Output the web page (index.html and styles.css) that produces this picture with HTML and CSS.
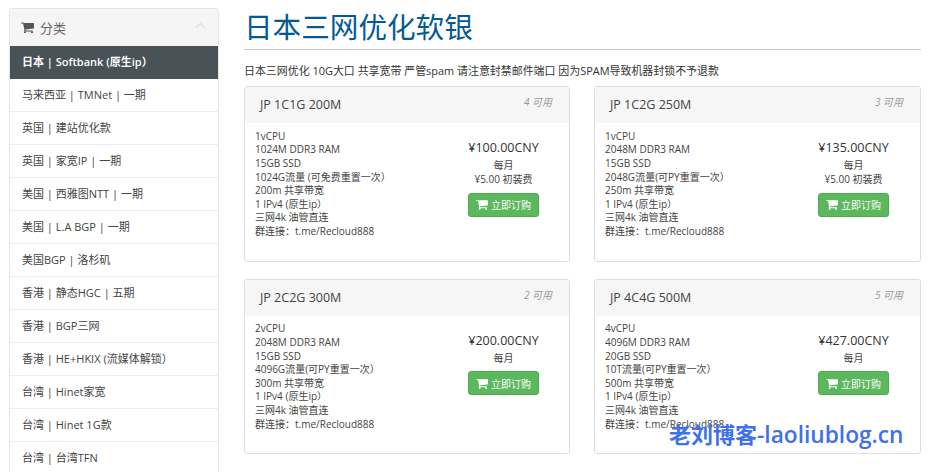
FILE: index.html
```html
<!DOCTYPE html>
<html lang="zh">
<head>
<meta charset="utf-8">
<title>日本三网优化软银</title>
<link rel="stylesheet" href="styles.css">
</head>
<body>
<svg class="defs" width="0" height="0"><defs><symbol id="cart" viewBox="0 0 1664 1408"><path d="M640 1280a128 128 0 1 1-256 0 128 128 0 0 1 256 0zm896 0a128 128 0 1 1-256 0 128 128 0 0 1 256 0zm128-1088v512c0 32-25 60-57 64L563 896c5 23 13 47 13 64 0 23-14 44-24 64h920c35 0 64 29 64 64s-29 64-64 64H448c-35 0-64-29-64-64 0-31 45-105 61-136L268 128H64C29 128 0 99 0 64S29 0 64 0h256c42 0 47 50 53 64h1227c35 0 64 29 64 64z" transform="translate(0 64)"/></symbol></defs></svg>
<div class="page">
<aside class="sidebar">
<div class="side-head">
<span class="side-title"><svg class="icon-head"><use href="#cart"/></svg>分类</span>
<svg class="chevron" viewBox="0 0 16 10"><path d="M1.5 8.5 8 2l6.5 6.5" fill="none" stroke="currentColor" stroke-width="2.6"/></svg>
</div>
<ul class="side-list">
<li class="side-item active">日本 | Softbank (原生ip）</li>
<li class="side-item">马来西亚 | TMNet | 一期</li>
<li class="side-item">英国 | 建站优化款</li>
<li class="side-item">英国 | 家宽IP | 一期</li>
<li class="side-item">美国 | 西雅图NTT | 一期</li>
<li class="side-item">美国 | L.A BGP | 一期</li>
<li class="side-item">美国BGP | 洛杉矶</li>
<li class="side-item">香港 | 静态HGC | 五期</li>
<li class="side-item">香港 | BGP三网</li>
<li class="side-item">香港 | HE+HKIX (流媒体解锁）</li>
<li class="side-item">台湾 | Hinet家宽</li>
<li class="side-item">台湾 | Hinet 1G款</li>
<li class="side-item">台湾 | 台湾TFN</li>
</ul>
</aside>
<main class="main">
<h1 class="title">日本三网优化软银</h1>
<p class="desc">日本三网优化 10G大口 共享宽带 严管spam 请注意封禁邮件端口 因为SPAM导致机器封锁不予退款</p>
<div class="cards">
<section class="card">
<header class="card-head"><span class="card-name">JP 1C1G 200M</span><em class="stock">4 可用</em></header>
<div class="card-body">
<div class="specs">1vCPU<br>1024M DDR3 RAM<br>15GB SSD<br>1024G流量 (可免费重置一次）<br>200m 共享带宽<br>1 IPv4 (原生ip）<br>三网4k 油管直连<br>群连接：t.me/Recloud888</div>
<div class="buy"><div class="price">¥100.00CNY</div><div class="cycle">每月</div><div class="cycle">¥5.00 初装费</div><a class="btn"><svg class="icon-btn"><use href="#cart"/></svg>立即订购</a></div>
</div>
</section>
<section class="card">
<header class="card-head"><span class="card-name">JP 1C2G 250M</span><em class="stock">3 可用</em></header>
<div class="card-body">
<div class="specs">1vCPU<br>2048M DDR3 RAM<br>15GB SSD<br>2048G流量(可PY重置一次）<br>250m 共享带宽<br>1 IPv4 (原生ip）<br>三网4k 油管直连<br>群连接：t.me/Recloud888</div>
<div class="buy"><div class="price">¥135.00CNY</div><div class="cycle">每月</div><div class="cycle">¥5.00 初装费</div><a class="btn"><svg class="icon-btn"><use href="#cart"/></svg>立即订购</a></div>
</div>
</section>
<section class="card">
<header class="card-head"><span class="card-name">JP 2C2G 300M</span><em class="stock">2 可用</em></header>
<div class="card-body">
<div class="specs">2vCPU<br>2048M DDR3 RAM<br>15GB SSD<br>4096G流量(可PY重置一次）<br>300m 共享带宽<br>1 IPv4 (原生ip）<br>三网4k 油管直连<br>群连接：t.me/Recloud888</div>
<div class="buy"><div class="price">¥200.00CNY</div><div class="cycle">每月</div><a class="btn"><svg class="icon-btn"><use href="#cart"/></svg>立即订购</a></div>
</div>
</section>
<section class="card">
<header class="card-head"><span class="card-name">JP 4C4G 500M</span><em class="stock">5 可用</em></header>
<div class="card-body">
<div class="specs">4vCPU<br>4096M DDR3 RAM<br>20GB SSD<br>10T流量(可PY重置一次）<br>500m 共享带宽<br>1 IPv4 (原生ip）<br>三网4k 油管直连<br>群连接：t.me/Recloud888</div>
<div class="buy"><div class="price">¥427.00CNY</div><div class="cycle">每月</div><a class="btn"><svg class="icon-btn"><use href="#cart"/></svg>立即订购</a></div>
</div>
</section>
</div>
</main>
</div>
<div class="watermark"><span class="wm-cjk">老刘博客</span>-laoliublog.cn</div>
</body>
</html>
```
FILE: styles.css
```css
* { box-sizing: border-box; }
html, body { margin: 0; height: 472px; overflow: hidden; background: #fff; }
body { font-family: "Open Sans", "Noto Sans CJK SC", sans-serif; font-size: 10px; color: #333; position: relative; }
.defs { position: absolute; }
.page { display: flex; align-items: flex-start; padding: 8px 8px 0 9px; gap: 25px; }
.sidebar { width: 210px; flex: none; border: 1px solid #e6e6e6; border-bottom: 0; border-radius: 4px 4px 0 0; }
.side-head { height: 37px; background: #f5f5f5; display: flex; align-items: center; justify-content: space-between; padding: 0 12px 0 11px; color: #666; font-size: 13px; }
.side-title { display: flex; align-items: center; }
.icon-head { width: 13px; height: 11px; margin-right: 6px; fill: #555; }
.chevron { width: 11px; height: 7px; color: #e4e4e4; margin-top: -4px; }
.side-list { list-style: none; margin: 0; padding: 0; }
.side-item { height: 33px; line-height: 32px; padding: 0 12px; font-size: 11px; color: #444; border-bottom: 1px solid #eee; white-space: nowrap; }
.side-item.active { background: #495257; color: #fff; font-weight: 600; border-bottom: 0; }
.main { width: 677px; flex: none; }
.title { margin: 0; height: 42px; font-size: 28.6px; line-height: 38px; font-weight: 400; color: #035a94; border-bottom: 1px solid #ccc; }
.desc { margin: 0; padding-top: 13px; height: 36px; font-size: 10.95px; line-height: 15px; color: #333; white-space: nowrap; }
.cards { display: grid; grid-template-columns: 326px 327px; column-gap: 24px; row-gap: 17px; }
.card { height: 175.6px; border: 1px solid #ddd; border-radius: 3px; }
.card-head { height: 36px; background: #f6f6f6; display: flex; justify-content: space-between; align-items: flex-start; padding: 0 17px 0 15px; }
.card-name { font-size: 12.5px; line-height: 36.8px; color: #444; }
.stock { font-size: 10px; line-height: 30px; color: #999; font-style: italic; }
.card-body { display: flex; padding: 6.9px 0 0 10px; }
.specs { width: 200px; font-size: 10px; line-height: 13.6px; color: #444; white-space: nowrap; }
.buy { width: 72px; margin-left: 12.5px; padding-top: 8.1px; text-align: center; flex: none; white-space: nowrap; }
.price { font-size: 12.5px; line-height: 20px; color: #333; }
.cycle { font-size: 10px; line-height: 14.5px; color: #444; }
.btn { display: flex; align-items: center; justify-content: center; height: 24px; width: 71px; margin: 6px auto 0; border-radius: 3px; background: #5cb85c; border: 1px solid #4cae4c; color: #fff; font-size: 10px; }
.icon-btn { width: 12px; height: 11px; margin-right: 3px; fill: #fff; }
.watermark { position: absolute; left: 669px; top: 419px; font-size: 22.7px; line-height: 30px; font-weight: 600; color: #4070ea; white-space: nowrap; font-family: "Open Sans", "Noto Sans CJK SC", sans-serif; }
.wm-cjk { font-weight: 700; font-size: 22px; }
```
